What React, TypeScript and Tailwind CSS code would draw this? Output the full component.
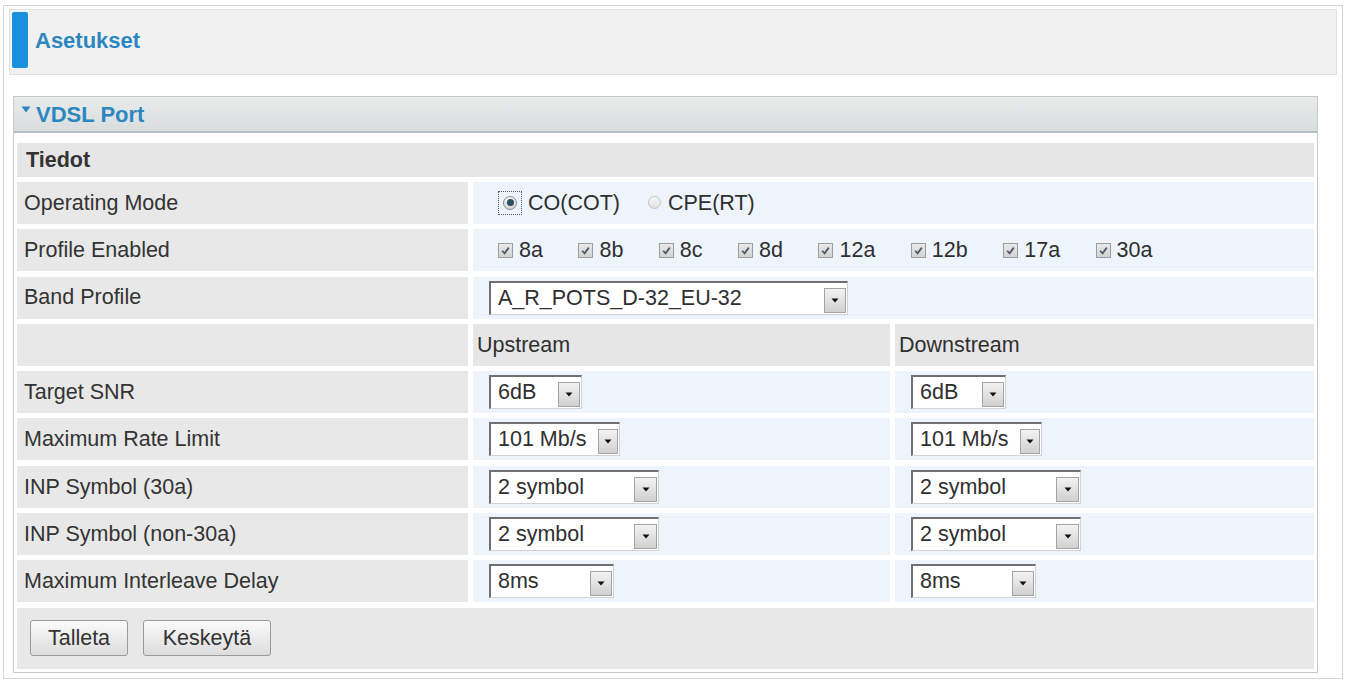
import React from "react";

function Arrow() {
  return (
    <svg width="8" height="5" viewBox="0 0 8 5">
      <path d="M0.5 0.5 L7.5 0.5 L4 4.5 Z" fill="#111" />
    </svg>
  );
}

function Sel({ w, text, btn }: { w: string; text: string; btn?: string }) {
  return (
    <div
      className={`flex h-[34px] items-stretch bg-white border-t-2 border-l-2 border-t-[#707070] border-l-[#707070] border-r border-b border-r-[#d2d2d2] border-b-[#d2d2d2] ${w}`}
    >
      <span className="flex-1 pl-[7px] leading-[30px] text-[21.5px] text-[#2f2f2f] whitespace-nowrap overflow-hidden">
        {text}
      </span>
      <span
        className={`mt-[5px] mb-[1px] mr-[1px] flex items-center justify-center border border-[#a4a4a4] bg-linear-to-b from-[#f3f3f3] to-[#d0d0d0] ${btn ?? "w-[22px]"}`}
      >
        <Arrow />
      </span>
    </div>
  );
}

function Check({ label }: { label: string }) {
  return (
    <div className="flex items-center">
      <span className="flex h-[15px] w-[15px] items-center justify-center border border-[#9c9c9c] bg-linear-to-b from-[#e9e9e9] to-[#d2d2d2]">
        <svg width="11" height="11" viewBox="0 0 10 10">
          <path d="M2 5.2 L4.2 7.6 L8 2.4" stroke="#4e5866" strokeWidth="1.6" fill="none" />
        </svg>
      </span>
      <span className="ml-[6px]">{label}</span>
    </div>
  );
}

const Label = ({ children }: { children?: React.ReactNode }) => (
  <div className="flex h-[42px] items-center bg-[#e8e8e8] pl-[7px] text-[#333]">{children}</div>
);

const Val = ({ children, span }: { children?: React.ReactNode; span?: boolean }) => (
  <div className={`flex h-[42px] items-center bg-[#eef4fb] ${span ? "col-span-2 pl-[16px]" : "pl-[16px]"}`}>
    {children}
  </div>
);

export default function App() {
  return (
    <div className="h-[681px] w-[1346px] overflow-hidden bg-white px-[3px] pt-[5px] font-['Liberation_Sans',Arial,sans-serif] text-[21.5px] text-[#2f2f2f]">
      <div className="h-[674px] border border-[#d5d5d5] px-[5px] pt-[3px]">
        {/* page header */}
        <div className="flex h-[66px] items-start border border-[#e2e2e2] bg-[#f1f1f1] p-[2px]">
          <div className="flex h-[56px] items-center">
            <div className="h-[56px] w-[16px] rounded-[2px] bg-[#1a8fdc]" />
            <div className="ml-[7px] text-[22px] font-bold text-[#2c86c0]">Asetukset</div>
          </div>
        </div>

        {/* panel */}
        <div className="ml-[4px] mr-[19px] mt-[21px] border border-[#c9c9c9] bg-white">
          <div className="flex h-[36px] items-center border-b-2 border-b-[#b4bdc1] bg-linear-to-b from-[#e9ebeb] to-[#d9dddd] pl-[7px]">
            <svg width="10" height="7" viewBox="0 0 10 7" className="mb-[9px]">
              <path d="M0.5 0.5 L9.5 0.5 L5 6.5 Z" fill="#2c86c0" />
            </svg>
            <span className="ml-[5px] text-[22px] font-bold text-[#2c86c0]">VDSL Port</span>
          </div>

          <div className="grid grid-cols-[451px_417px_1fr] gap-x-[5px] gap-y-[5.3px] px-[3px] pb-[3px] pt-[10px]">
            <div className="col-span-3 flex h-[33.7px] items-center bg-[#e6e6e6] pl-[9px] font-bold text-[#333]">
              Tiedot
            </div>

            <Label>Operating Mode</Label>
            <Val span>
              <div className="ml-[9px] flex items-center">
                <span className="flex h-[24px] w-[24px] items-center justify-center border border-dotted border-[#555]">
                  <span className="flex h-[14px] w-[14px] items-center justify-center rounded-full border border-[#888] bg-linear-to-b from-[#f4f4f4] to-[#d6d6d6]">
                    <span className="h-[7px] w-[7px] rounded-full bg-[#29525e]" />
                  </span>
                </span>
                <span className="ml-[6px]">CO(COT)</span>
                <span className="ml-[28px] h-[13px] w-[13px] rounded-full border border-[#c4c4c4] bg-linear-to-b from-[#f7f7f7] to-[#e0e0e0]" />
                <span className="ml-[7px]">CPE(RT)</span>
              </div>
            </Val>

            <Label>Profile Enabled</Label>
            <Val span>
              <div className="ml-[9px] flex items-center gap-x-[35.5px]">
                {["8a", "8b", "8c", "8d", "12a", "12b", "17a", "30a"].map((p) => (
                  <Check key={p} label={p} />
                ))}
              </div>
            </Val>

            <Label>Band Profile</Label>
            <Val span>
              <Sel w="w-[359px]" text="A_R_POTS_D-32_EU-32" />
            </Val>

            <Label />
            <div className="flex h-[42px] items-center bg-[#e6e6e6] pl-[4px]">Upstream</div>
            <div className="flex h-[42px] items-center bg-[#e6e6e6] pl-[4px]">Downstream</div>

            <Label>Target SNR</Label>
            <Val>
              <Sel w="w-[93px]" text="6dB" />
            </Val>
            <Val>
              <Sel w="w-[95px]" text="6dB" />
            </Val>

            <Label>Maximum Rate Limit</Label>
            <Val>
              <Sel w="w-[131px]" text="101 Mb/s" btn="w-[20px]" />
            </Val>
            <Val>
              <Sel w="w-[131px]" text="101 Mb/s" btn="w-[20px]" />
            </Val>

            <Label>INP Symbol (30a)</Label>
            <Val>
              <Sel w="w-[170px]" text="2 symbol" btn="w-[23px]" />
            </Val>
            <Val>
              <Sel w="w-[170px]" text="2 symbol" btn="w-[23px]" />
            </Val>

            <Label>INP Symbol (non-30a)</Label>
            <Val>
              <Sel w="w-[170px]" text="2 symbol" btn="w-[23px]" />
            </Val>
            <Val>
              <Sel w="w-[170px]" text="2 symbol" btn="w-[23px]" />
            </Val>

            <Label>Maximum Interleave Delay</Label>
            <Val>
              <Sel w="w-[125px]" text="8ms" />
            </Val>
            <Val>
              <Sel w="w-[125px]" text="8ms" />
            </Val>

            <div className="col-span-3 flex h-[61px] items-center gap-[15px] bg-[#e8e8e8] pl-[13px]">
              <button className="h-[36px] w-[98px] rounded-[3px] border border-[#9a9a9a] bg-linear-to-b from-[#fbfbfb] to-[#dcdcdc] text-[21.5px] text-[#333]">
                Talleta
              </button>
              <button className="h-[36px] w-[128px] rounded-[3px] border border-[#9a9a9a] bg-linear-to-b from-[#fbfbfb] to-[#dcdcdc] text-[21.5px] text-[#333]">
                Keskeytä
              </button>
            </div>
          </div>
        </div>
      </div>
    </div>
  );
}
